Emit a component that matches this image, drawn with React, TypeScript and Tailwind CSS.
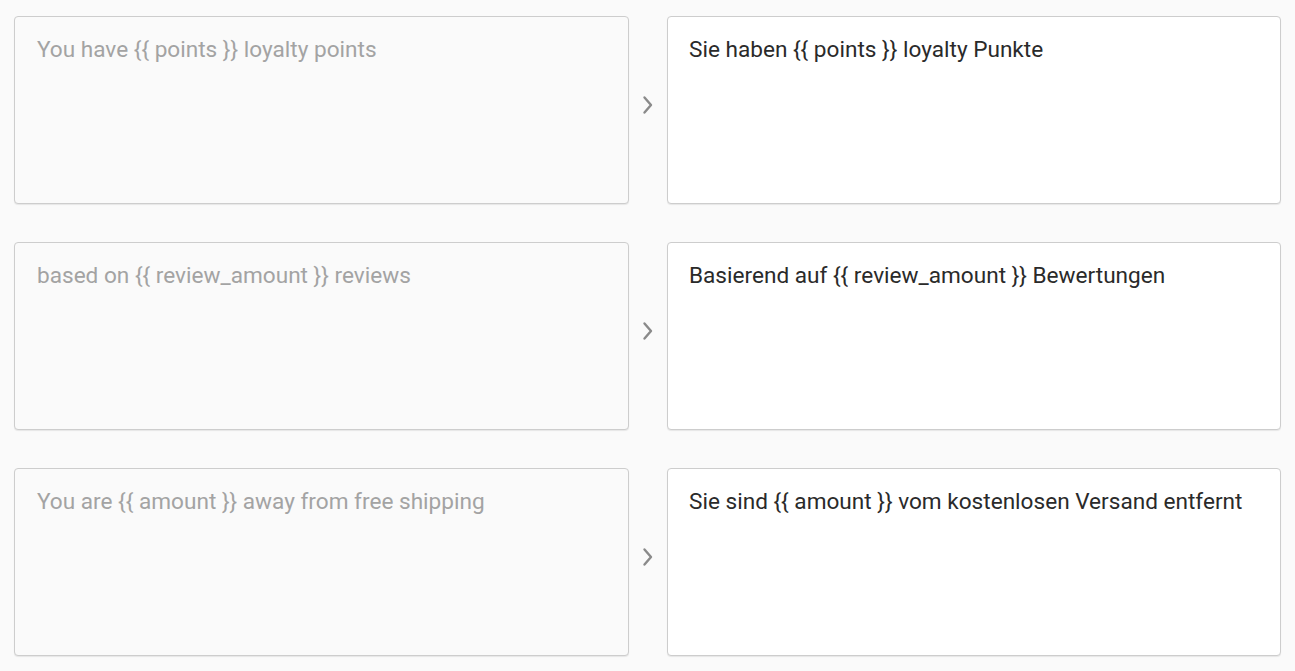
import React from 'react';

const rows = [
  { source: 'You have {{ points }} loyalty points', target: 'Sie haben {{ points }} loyalty Punkte' },
  { source: 'based on {{ review_amount }} reviews', target: 'Basierend auf {{ review_amount }} Bewertungen' },
  { source: 'You are {{ amount }} away from free shipping', target: 'Sie sind {{ amount }} vom kostenlosen Versand entfernt' },
];

const Chevron = () => (
  <svg width="14" height="20" viewBox="0 0 14 20" fill="none">
    <path d="M3.5 2.5 L10 10 L3.5 17.5" stroke="#8a8a8a" strokeWidth="2.4" strokeLinecap="round" strokeLinejoin="round" />
  </svg>
);

export default function App() {
  return (
    <div className="min-h-screen bg-[#fafafa] pl-[14px] pt-4 flex flex-col gap-[38px] text-[22.6px] leading-[33px]" style={{ fontFamily: 'Roboto, sans-serif' }}>
      {rows.map((row, idx) => (
        <div key={idx} className="flex">
          <div className="w-[615px] h-[188px] rounded border border-[#cdcdcd] bg-[#fafafa] px-[22px] pt-[16px] text-[#a3a3a3] shadow-[0_1px_1px_rgba(0,0,0,0.08)]">
            {row.source}
          </div>
          <div className="w-[38px] flex justify-center pt-[79px]">
            <div>
              <Chevron />
            </div>
          </div>
          <div className="w-[614px] h-[188px] rounded border border-[#cdcdcd] bg-white px-[21px] pt-[16px] text-[#2a2a2a] shadow-[0_1px_1px_rgba(0,0,0,0.08)]">
            {row.target}
          </div>
        </div>
      ))}
    </div>
  );
}
